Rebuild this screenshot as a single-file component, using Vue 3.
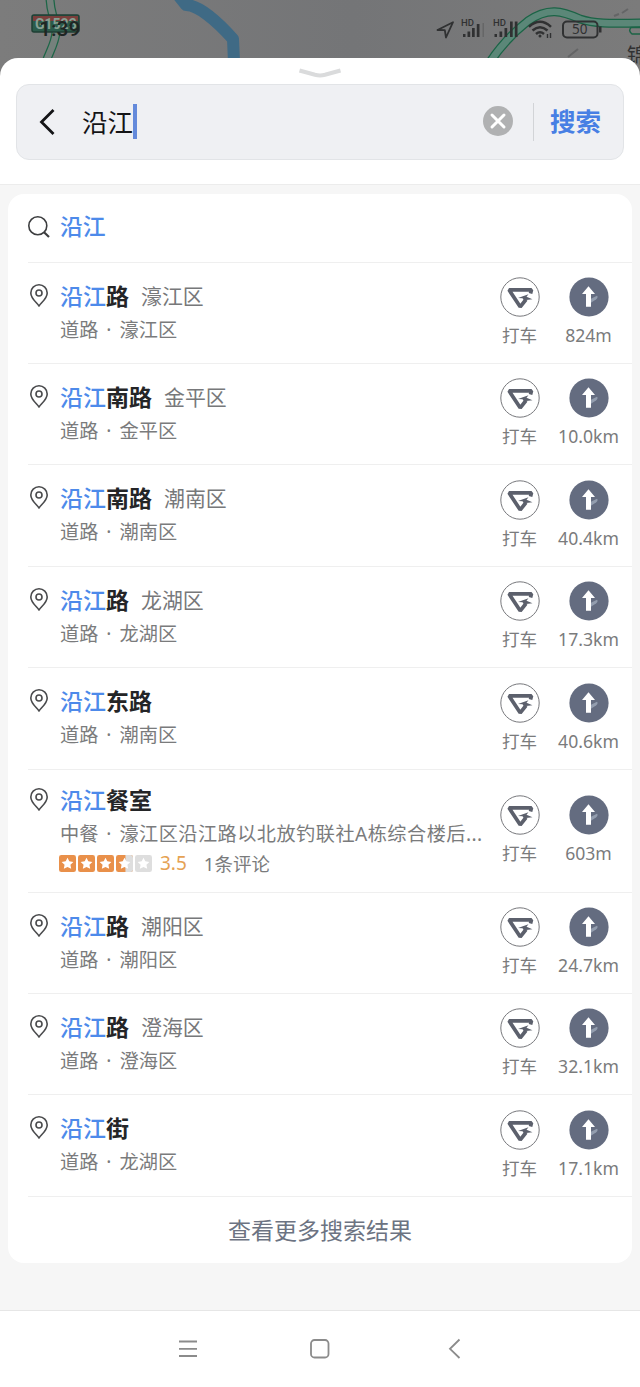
<script setup>
const results = [
  { name: '路', area: '濠江区', kind: '道路', place: '濠江区', dist: '824m' },
  { name: '南路', area: '金平区', kind: '道路', place: '金平区', dist: '10.0km' },
  { name: '南路', area: '潮南区', kind: '道路', place: '潮南区', dist: '40.4km', h: 102 },
  { name: '路', area: '龙湖区', kind: '道路', place: '龙湖区', dist: '17.3km' },
  { name: '东路', area: '', kind: '道路', place: '潮南区', dist: '40.6km', h: 102 },
  { name: '餐室', area: '', kind: '中餐', place: '濠江区沿江路以北放钓联社A栋综合楼后...', dist: '603m', rating: 3.5, reviews: '1条评论', h: 123 },
  { name: '路', area: '潮阳区', kind: '道路', place: '潮阳区', dist: '24.7km' },
  { name: '路', area: '澄海区', kind: '道路', place: '澄海区', dist: '32.1km' },
  { name: '街', area: '', kind: '道路', place: '龙湖区', dist: '17.1km', h: 102 },
]
const star = 'M9 2.8l1.900 3.900 4.300.6-3.100 3 .8 4.300L9 12.600l-3.900 2 .8-4.300-3.100-3 4.300-.6z'
</script>

<template>
  <div class="screen">
    <div class="map">
      <svg class="map-art" width="640" height="90" viewBox="0 0 640 90">
        <defs>
          <linearGradient id="ground" x1="0" x2="1" y1="0" y2="0">
            <stop offset="0" stop-color="#7c7c7c" />
            <stop offset=".55" stop-color="#747577" />
            <stop offset="1" stop-color="#7b7b7b" />
          </linearGradient>
        </defs>
        <rect width="640" height="90" fill="url(#ground)" />
        <path d="M178 -5L186 5C198 5 216 20 233 39L234 62" fill="none" stroke="#3f6a85" stroke-width="12" stroke-linejoin="round" />
        <g fill="none">
          <path d="M50 -2C50 12 55 18 56 32C55 44 50 50 46 62" stroke="#1d6647" stroke-width="9" />
          <path d="M50 -2C50 12 55 18 56 32C55 44 50 50 46 62" stroke="#75817c" stroke-width="6.500" />
          <path d="M490 62C502 44 514 32 528 21C548 7 562 11 580 19C598 25 620 23 642 23" stroke="#1b6446" stroke-width="9" />
          <path d="M490 62C502 44 514 32 528 21C548 7 562 11 580 19C598 25 620 23 642 23" stroke="#5b8778" stroke-width="6.500" />
          <path d="M642 27.500H631Q628 31 632 34H642" stroke="#1b6446" stroke-width="1.500" />
          <path d="M568 57l10-8M614 16l5-2m3-1l6-4" stroke="#646566" stroke-width="2" />
        </g>
        <rect x="32" y="15" width="47" height="17" rx="2" fill="#2b5b4b" stroke="#1f3f34" stroke-width="1.500" />
        <rect x="33" y="16" width="45" height="5" fill="#7a3f3c" />
      </svg>
      <span class="road-code">G1523</span>
      <span class="map-place">锦</span>
      <div class="status">
        <span class="clock">1:39</span>
        <svg width="172" height="24" viewBox="0 0 172 24" fill="none" stroke="#303132">
          <path d="M1.500 13L17 5.200L10 20.500L8.800 13.200Z" stroke-width="1.800" stroke-linejoin="round" />
          <g fill="#303132" stroke="none">
            <path d="M27 17h2.500v3H27zM31.500 14.500h2.700v5.500h-2.700zM36 11h2.700v9H36zM40.800 7h2.700v13h-2.700z" />
            <path d="M58.500 17h2.500v3h-2.500zM63.500 14.500h2.700v5.500h-2.700zM68.500 11h2.700v9h-2.700zM74 4.500h2.700v15.500H74zM78.800 4.500h2.700v15.500h-2.700z" />
            <path d="M46.500 6h1.500v14h-1.500z" opacity=".25" />
            <path d="M163 9.500h2.500v6H163z" />
          </g>
          <path d="M93 9.800Q104 -.2 115 9.800M96.500 13.500Q104 7 111.500 13.500M100 17Q104 13.500 108 17" stroke-width="2.500" />
          <circle cx="104" cy="19" r="1.500" fill="#303132" stroke="none" />
          <path d="M111.500 17v4M114.500 16v5" stroke-width="1.400" />
          <rect x="127" y="4.500" width="34.500" height="16" rx="4" stroke-width="2" />
        </svg>
        <span class="hd hd-one">HD</span>
        <span class="hd hd-two">HD</span>
        <span class="battery">50</span>
      </div>
    </div>

    <section class="sheet">
      <header class="head">
        <svg class="grip" width="44" height="12" viewBox="0 0 44 12" fill="none" stroke="#dadbdc" stroke-width="4">
          <path d="M1.500 3.500L17 7.800Q22 9 27 7.800L42.500 3.500" />
        </svg>
        <div class="search">
          <svg class="back" width="18" height="28" viewBox="0 0 18 28" fill="none" stroke="#141416" stroke-width="2.800">
            <path d="M15.500 2L3.500 14L15.500 26" />
          </svg>
          <span class="query">沿江</span><i class="caret"></i>
          <svg class="clear" width="30" height="30" viewBox="0 0 30 30">
            <circle cx="15" cy="15" r="15" fill="#b0b1b2" />
            <path d="M9 9L21 21M21 9L9 21" stroke="#fff" stroke-width="3" stroke-linecap="round" />
          </svg>
          <i class="split"></i>
          <b class="go">搜索</b>
        </div>
      </header>

      <main class="body">
        <div class="card">
          <div class="suggest">
            <svg width="22" height="22" viewBox="0 0 22 22" fill="none" stroke="#3d3e40">
              <circle cx="9.800" cy="9.800" r="9" stroke-width="1.600" />
              <path d="M15.800 16L21 21" stroke-width="2.200" />
            </svg>
            <b>沿江</b>
          </div>
          <article v-for="(r, i) in results" :key="i" class="row" :class="{ rated: r.rating }" :style="{ height: (r.h || 101) + 'px' }">
            <svg class="pin" width="18" height="23" viewBox="0 0 18 23" fill="none" stroke="#4a4b4d" stroke-width="1.600">
              <path d="M9 22C7 18.800 .8 14.500 .8 8.900A8.200 8.100 0 0 1 17.200 8.900C17.200 14.500 11 18.800 9 22Z" stroke-linejoin="round" />
              <circle cx="9" cy="9" r="3" />
            </svg>
            <div class="info">
              <div class="title"><b><em>沿江</em>{{ r.name }}</b><span v-if="r.area">{{ r.area }}</span></div>
              <div class="sub"><span>{{ r.kind }}</span><i>·</i><span class="place">{{ r.place }}</span></div>
              <div v-if="r.rating" class="rating">
                <svg v-for="n in 5" :key="n" width="17" height="17" viewBox="0 0 18 18">
                  <rect width="18" height="18" rx="2.500" :fill="n <= 4 ? '#e9904a' : '#dedede'" />
                  <path v-if="n === 4" d="M10 0h5.500a2.500 2.500 0 0 1 2.500 2.500v13a2.500 2.500 0 0 1-2.500 2.500H10z" fill="#dedede" />
                  <path :d="star" fill="#fff" />
                </svg>
                <span class="score">{{ r.rating }}</span>
                <span class="reviews">{{ r.reviews }}</span>
              </div>
            </div>
            <div class="act">
              <svg width="40" height="40" viewBox="0 0 40 40">
                <circle cx="20" cy="20" r="19.200" fill="#fff" stroke="#77787c" />
                <path d="M30.500 16.500L31.500 12.800H9L20.200 29.800L26 22.500" fill="none" stroke="#5c606c" stroke-width="3.700" stroke-linejoin="bevel" />
                <path d="M18 21L28.500 17.200L26.500 19.800L32.500 22.300L24 23.300L22.500 21.300Z" fill="#5c606c" />
              </svg>
              <span>打车</span>
            </div>
            <div class="act">
              <svg width="40" height="40" viewBox="0 0 40 40">
                <circle cx="20" cy="20" r="19.600" fill="#646c80" />
                <path d="M21.500 22L28 18.800Q29.500 20.500 27 22.500L21.500 26Z" fill="#939dae" />
                <path d="M19.500 9.300L26 17H22V29.800H17V17H13Z" fill="#fff" />
              </svg>
              <span>{{ r.dist }}</span>
            </div>
          </article>
          <div class="more">查看更多搜索结果</div>
        </div>
      </main>
    </section>

    <nav class="nav">
      <svg width="640" height="76" viewBox="0 0 640 76" fill="none" stroke="#8b8b8b" stroke-width="1.800">
        <path d="M179 30.500h18M179 37.800h18M179 45h18" />
        <rect x="311" y="29" width="17.500" height="17.500" rx="3.500" />
        <path d="M459.500 28.500L450 37.800L459.500 47" />
      </svg>
    </nav>
  </div>
</template>

<style>
body { margin: 0; background: #fff; }
</style>

<style scoped>
.screen { position: relative; width: 640px; height: 1387px; overflow: hidden; display: flex; flex-direction: column; font-family: "Noto Sans", "Noto Sans CJK SC", sans-serif; color: #7a7b7c; }
i, em { font-style: normal; }
svg { display: block; flex: none; }
.map { height: 58px; flex: none; position: relative; }
.map-art { position: absolute; left: 0; top: 0; }
.road-code { position: absolute; left: 35px; top: 17px; font: bold 14px/15px Roboto, sans-serif; color: #87a094; }
.map-place { position: absolute; left: 627px; top: 43px; font-size: 20px; line-height: 26px; color: #303132; }
.clock { position: absolute; left: 39px; top: 17px; font: 500 21px/24px Roboto, sans-serif; color: #1f2523; }
.status > svg { position: absolute; left: 436px; top: 17px; }
.hd { position: absolute; top: 18px; font: 500 9.500px/10px Roboto, sans-serif; color: #303132; }
.hd-one { left: 461px; }
.hd-two { left: 493px; }
.battery { position: absolute; left: 572px; top: 22px; font-size: 13.500px; line-height: 15px; color: #303132; }

.sheet { position: relative; height: 1252px; flex: none; background: #fff; border-radius: 18px 18px 0 0; display: flex; flex-direction: column; }
.head { height: 127px; flex: none; border-bottom: 1px solid #ececec; display: flex; flex-direction: column; align-items: center; box-sizing: border-box; padding-top: 9px; }
.search { margin-top: 5px; width: 608px; height: 76px; box-sizing: border-box; border: 1px solid #e2e4e7; border-radius: 13px; background: #eff0f3; display: flex; align-items: center; padding: 0 21px; }
.back { margin-top: -1px; }
.query { margin-left: 26px; font-size: 25.500px; line-height: 38px; color: #141416; margin-top: -1px; }
.caret { width: 4px; height: 35px; background: #648adb; margin-top: -2px; }
.clear { margin-left: auto; margin-right: 20px; margin-top: -2px; }
.split { width: 1px; height: 38px; background: #d2d4d7; margin-right: 16px; }
.go { font-size: 25.500px; line-height: 38px; font-weight: 700; color: #477fe4; margin-top: -2px; margin-right: 1px; }

.body { flex: 1; background: #f6f6f6; padding: 9px 8px 0; }
.card { background: #fff; border-radius: 16px; height: 1069px; display: flex; flex-direction: column; }
.suggest { height: 69px; box-sizing: border-box; margin-left: 20px; border-bottom: 1px solid #efefef; display: flex; align-items: center; gap: 10px; padding-bottom: 3px; }
.suggest b { font-size: 22.800px; line-height: 34px; font-weight: 500; color: #4d8aea; }
.row { flex: none; box-sizing: border-box; margin-left: 20px; border-bottom: 1px solid #efefef; display: flex; padding-right: 9px; }
.pin { margin: 21px 0 0 2px; }
.info { width: 425px; margin-left: 12px; padding-top: 16px; min-width: 0; }
.title { display: flex; align-items: center; height: 34px; line-height: 34px; }
.title b { font-size: 23px; font-weight: 700; color: #242527; }
.title em { color: #4d8aea; font-weight: 500; }
.title span { font-size: 20.900px; margin-left: 12px; color: #77787a; }
.sub { display: flex; width: 427px; height: 34px; line-height: 34px; font-size: 19.200px; white-space: nowrap; }
.sub i { width: 21px; text-align: center; flex: none; }
.place { letter-spacing: .1px; }
.rated .place { letter-spacing: .45px; }
.rating { display: flex; align-items: center; height: 25px; line-height: 25px; gap: 2px; margin-left: -1px; }
.score { margin-left: 6px; font-size: 19px; color: #e5a253; }
.reviews { margin-left: 15px; font-size: 18.500px; }
.rated .pin { margin-top: 18px; }
.rated .info { padding-top: 13px; }
.act { width: 69px; flex: none; display: flex; flex-direction: column; align-items: center; justify-content: center; font-size: 17.600px; line-height: 26px; gap: 6px; white-space: nowrap; }
.act span { margin-top: -1px; margin-bottom: 1px; }
.more { height: 64px; display: flex; align-items: center; justify-content: center; font-size: 23px; color: #6c7382; }
.nav { height: 76px; border-top: 1px solid #e6e6e6; background: #fff; }
</style>
